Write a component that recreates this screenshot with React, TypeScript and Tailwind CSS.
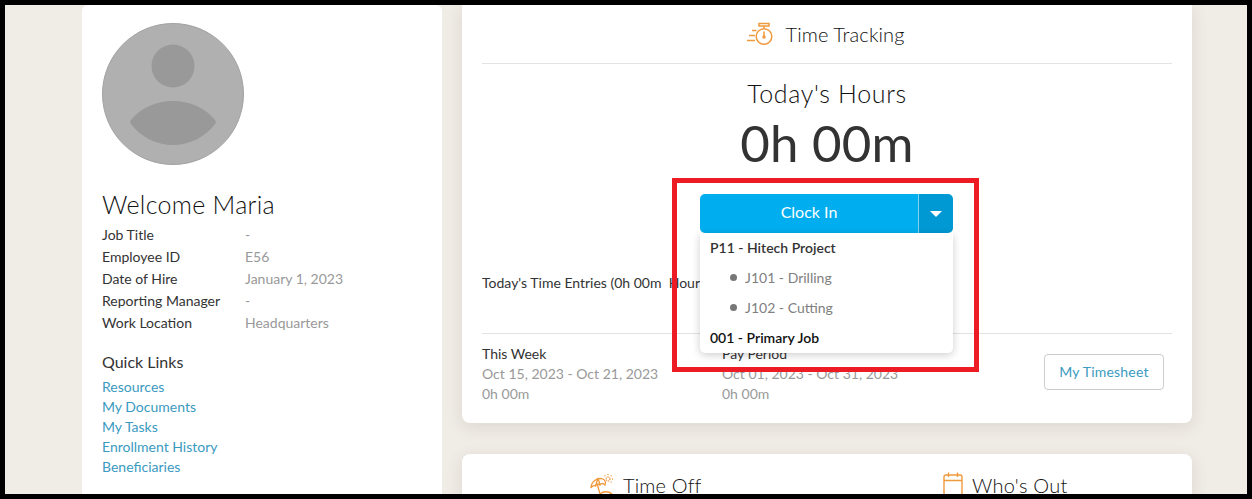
const profile = [
  ['Job Title', '-'],
  ['Employee ID', 'E56'],
  ['Date of Hire', 'January 1, 2023'],
  ['Reporting Manager', '-'],
  ['Work Location', 'Headquarters'],
];

const quickLinks = ['Resources', 'My Documents', 'My Tasks', 'Enrollment History', 'Beneficiaries'];

function Avatar() {
  return (
    <svg width="142" height="142" viewBox="0 0 142 142" className="block">
      <circle cx="71" cy="71" r="70.5" fill="#b0b0b0" stroke="#a3a3a3" />
      <circle cx="71" cy="43" r="21.5" fill="#999999" />
      <path d="M29 97 C38 85 55 78 71 78 C87 78 104 85 113 97 C114 99 114 100 113 101 C103 114 88 122 71 122 C54 122 39 114 29 101 C28 100 28 99 29 97 Z" fill="#999999" />
    </svg>
  );
}

function StopwatchIcon() {
  return (
    <svg width="29" height="24" viewBox="0 0 29 24" fill="none" stroke="#f09a3e" strokeWidth="1.5" className="block">
      <circle cx="18" cy="14.5" r="7.8" />
      <path d="M13 1.5h10v2.4H13zM18 4v2.5M18 9.5v5" />
      <circle cx="18" cy="15" r="1" fill="#f09a3e" />
      <path d="M6 8.5h4.5M3 13.5h6M1 18.5h8" />
    </svg>
  );
}

function BeachIcon() {
  return (
    <svg width="24" height="24" viewBox="0 0 24 24" fill="none" stroke="#f09a3e" strokeWidth="1.3" className="block">
      <path d="M2 16 C2 10 8 5 14 7 C16 8 17 10 16 13 C14 11 12 11 11 13 C10 12 8 11 6.5 14 C5 13 3 14 2 16 Z" />
      <path d="M9 6 L6.5 14M9 6 L11 13M8.5 13 L11 22" />
      <circle cx="19" cy="7" r="2" strokeDasharray="1.2 0.8" />
      <path d="M19 2v1.5M24 7h-1.5M15.5 3.5l1 1M22.5 3.5l-1 1M22.5 10.5l-1-1" strokeDasharray="1 0.7" />
      <path d="M11 22 C14 19 20 19 23 22" />
    </svg>
  );
}

function CalendarIcon() {
  return (
    <svg width="20" height="24" viewBox="0 0 20 24" fill="none" stroke="#f09a3e" strokeWidth="1.4" className="block">
      <rect x="1" y="3" width="18" height="20" rx="2" />
      <path d="M1 8.5h18M5.5 0.5v4.5M14.5 0.5v4.5" />
    </svg>
  );
}

export default function App() {
  return (
    <div className="relative h-[499px] w-[1252px] overflow-hidden border-[5px] border-black bg-[#f0ece6] font-['Lato',sans-serif] text-[#333333]">
      <div className="flex h-full gap-[20px] pl-[77px]">
        <aside className="h-full w-[360px] shrink-0 rounded-t-[6px] bg-white pl-[20px] pt-[18px]">
          <Avatar />
          <h1 className="mt-[23px] text-[25px] font-light leading-[32px] tracking-[0.3px] text-[#111111]">Welcome Maria</h1>
          <dl className="mt-[4px] text-[14px] leading-[22px]">
            {profile.map(([label, value]) => (
              <div key={label} className="flex">
                <dt className="w-[143px]">{label}</dt>
                <dd className="text-[#999999]">{value}</dd>
              </div>
            ))}
          </dl>
          <h2 className="mt-[16px] text-[16px] leading-[24px]">Quick Links</h2>
          <ul className="mt-[3px] text-[14px] leading-[20px] text-[#3a9abf]">
            {quickLinks.map((link) => (
              <li key={link}>{link}</li>
            ))}
          </ul>
        </aside>

        <main className="flex w-[730px] shrink-0 flex-col gap-[31px]">
          <section className="h-[418px] shrink-0 rounded-b-[8px] bg-white px-[20px] shadow-[0_4px_16px_rgba(120,110,90,0.16)]">
            <div className="flex h-[59px] items-center justify-center gap-[11px] border-b border-[#e3e3e3] pb-[1px] pr-[4px]">
              <StopwatchIcon />
              <span className="text-[20px] font-light tracking-[0.1px] text-[#111111]">Time Tracking</span>
            </div>
            <div className="mt-[13px] text-center text-[25px] font-light leading-[32px] tracking-[0.65px] text-[#111111]">Today's Hours</div>
            <div className="mt-[4px] text-center text-[51px] leading-[60px] tracking-[0.2px]">0h 00m</div>
            <div className="relative ml-[218px] mt-[21px] flex h-[39px] w-[253px] rounded-[5px] text-white">
              <div className="flex w-[218px] items-center justify-center rounded-l-[5px] bg-[#00aeef] pb-[3px] text-[16px]">Clock In</div>
              <div className="flex flex-1 items-center justify-center rounded-r-[5px] border-l border-[#7fd4f5] bg-[#0099d4]">
                <span className="mt-[1px] h-0 w-0 border-x-[6px] border-t-[6px] border-x-transparent border-t-white" />
              </div>
              <div className="absolute left-0 top-[39px] z-10 h-[120px] w-[253px] rounded-b-[5px] bg-white text-[14px] shadow-[0_2px_8px_rgba(0,0,0,0.2)]">
                <div className="flex h-[30px] items-center pb-[2px] pl-[10px] font-semibold text-[#333333]">P11 - Hitech Project</div>
                {['J101 - Drilling', 'J102 - Cutting'].map((job) => (
                  <div key={job} className="flex h-[30px] items-center pb-[2px] pl-[30px] text-[#808080]">
                    <span className="mr-[8px] h-[7px] w-[7px] rounded-full bg-[#777777]" />
                    {job}
                  </div>
                ))}
                <div className="flex h-[30px] items-center pb-[2px] pl-[10px] font-semibold text-[#111111]">001 - Primary Job</div>
              </div>
            </div>
            <div className="mt-[40px] text-[14px] leading-[20px]">Today's Time Entries (0h 00m&nbsp; Hours)</div>
            <div className="mt-[40px] flex border-t border-[#e3e3e3] pt-[10px] text-[14px] leading-[20px]">
              <div className="w-[240px]">
                <div>This Week</div>
                <div className="text-[#999999]">Oct 15, 2023 - Oct 21, 2023</div>
                <div className="text-[#999999]">0h 00m</div>
              </div>
              <div className="flex-1">
                <div>Pay Period</div>
                <div className="text-[#999999]">Oct 01, 2023 - Oct 31, 2023</div>
                <div className="text-[#999999]">0h 00m</div>
              </div>
              <div className="mr-[8px] mt-[10px] flex h-[36px] w-[120px] items-center justify-center rounded-[4px] border border-[#cccccc] tracking-[0.2px] text-[#3a9abf]">
                My Timesheet
              </div>
            </div>
          </section>

          <section className="flex flex-1 rounded-t-[8px] bg-white pt-[18px] shadow-[0_4px_16px_rgba(120,110,90,0.16)]">
            <div className="flex w-[365px] items-start gap-[10px] pl-[127px]">
              <BeachIcon />
              <span className="text-[20px] font-light leading-[26px] tracking-[0.15px] text-[#111111]">Time Off</span>
            </div>
            <div className="flex items-start gap-[9px] pl-[116px]">
              <CalendarIcon />
              <span className="text-[20px] font-light leading-[26px] tracking-[0.25px] text-[#111111]">Who's Out</span>
            </div>
          </section>
        </main>
      </div>

      <div className="pointer-events-none absolute left-[667px] top-[173px] z-20 h-[194px] w-[307px] border-[5px] border-[#ed1c24]" />
    </div>
  );
}
